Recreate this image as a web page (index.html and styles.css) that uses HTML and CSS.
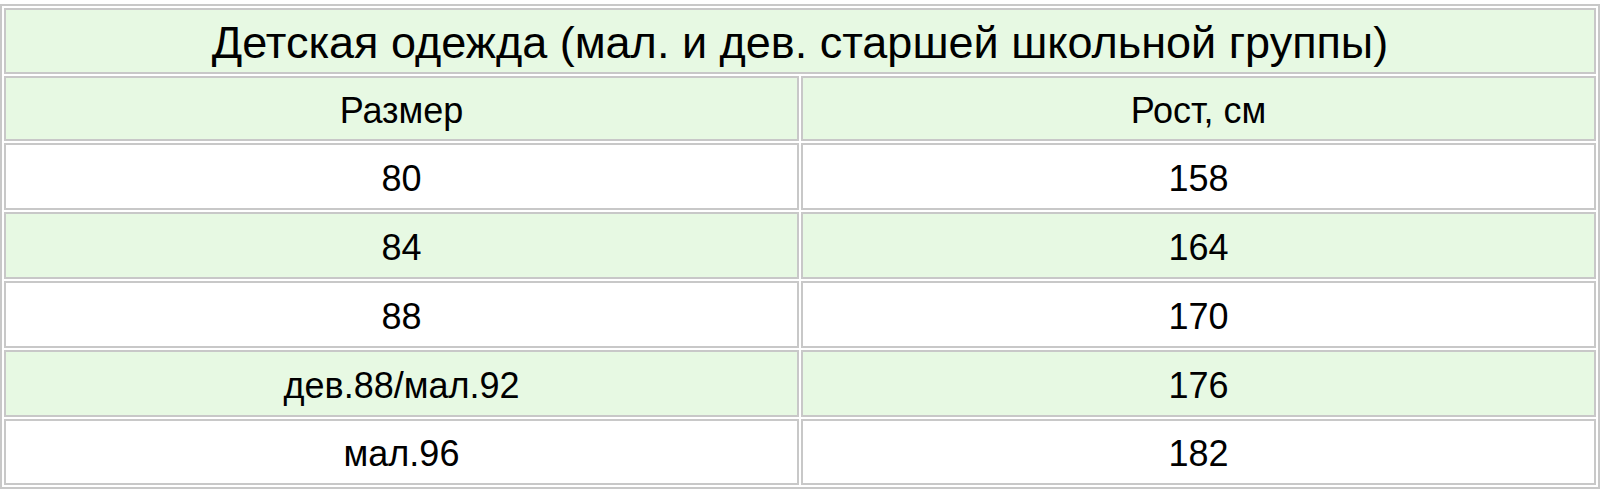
FILE: index.html
```html
<!DOCTYPE html>
<html lang="ru">
<head>
<meta charset="utf-8">
<title>Размеры</title>
<link rel="stylesheet" href="styles.css">
</head>
<body>
<div class="wrap">
<table class="sizes">
  <tr class="green row-title"><td class="title" colspan="2">Детская одежда (мал. и дев. старшей школьной группы)</td></tr>
  <tr class="green row-head"><td>Размер</td><td>Рост, см</td></tr>
  <tr><td>80</td><td>158</td></tr>
  <tr class="green"><td>84</td><td>164</td></tr>
  <tr><td>88</td><td>170</td></tr>
  <tr class="green"><td>дев.88/мал.92</td><td>176</td></tr>
  <tr class="row-last"><td>мал.96</td><td>182</td></tr>
</table>
</div>
</body>
</html>
```
FILE: styles.css
```css
html, body {
  margin: 0;
  padding: 0;
  background: #ffffff;
}
.wrap {
  padding-top: 4px;
}
.sizes {
  width: 1600px;
  border: 2px solid #c8c8c8;
  border-spacing: 2px;
  font-family: "Liberation Sans", Arial, sans-serif;
  color: #000;
  table-layout: fixed;
}
.sizes td {
  border: 2px solid #c8c8c8;
  height: 67px;
  padding: 4px 0 0 0;
  text-align: center;
  vertical-align: middle;
  font-size: 36px;
  box-sizing: border-box;
}
.sizes .row-title td {
  height: 66px;
  font-size: 45px;
}
.sizes .row-head td {
  height: 65px;
}
.sizes .row-last td {
  height: 66px;
}
.green td {
  background: #e7f9e3;
}
```
